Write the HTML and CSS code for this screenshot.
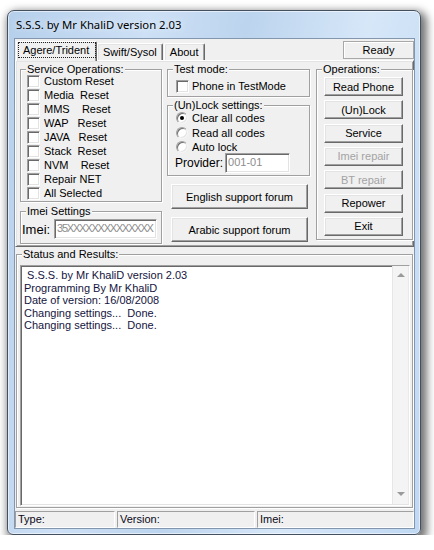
FILE: index.html
```html
<!DOCTYPE html>
<html>
<head>
<meta charset="utf-8">
<title>S.S.S. by Mr KhaliD version 2.03</title>
<link rel="stylesheet" href="styles.css">
</head>
<body>
<div class="window">
  <div class="titlebar">S.S.S. by Mr KhaliD version 2.03</div>
  <div class="client">
    <div class="tabrow">
      <div class="tab active"><span class="focus">Agere/Trident</span></div>
      <div class="tab">Swift/Sysol</div>
      <div class="tab about">About</div>
      <div class="ready">Ready</div>
    </div>
    <div class="sheet">
      <div class="col col1">
        <div class="group service">
          <div class="gtitle">Service Operations:</div>
          <ul class="checks">
            <li><span class="cb"></span><span class="lbl">Custom Reset</span></li>
            <li><span class="cb"></span><span class="lbl">Media  Reset</span></li>
            <li><span class="cb"></span><span class="lbl">MMS    Reset</span></li>
            <li><span class="cb"></span><span class="lbl">WAP   Reset</span></li>
            <li><span class="cb"></span><span class="lbl">JAVA   Reset</span></li>
            <li><span class="cb"></span><span class="lbl">Stack  Reset</span></li>
            <li><span class="cb"></span><span class="lbl">NVM    Reset</span></li>
            <li><span class="cb"></span><span class="lbl">Repair NET</span></li>
            <li><span class="cb"></span><span class="lbl">All Selected</span></li>
          </ul>
        </div>
        <div class="group imei">
          <div class="gtitle">Imei Settings</div>
          <div class="imeirow">
            <span class="biglabel">Imei:</span>
            <span class="edit imeiedit">35XXXXXXXXXXXXXX</span>
          </div>
        </div>
      </div>
      <div class="col col2">
        <div class="group test">
          <div class="gtitle">Test mode:</div>
          <div class="testrow"><span class="cb"></span><span>Phone  in TestMode</span></div>
        </div>
        <div class="group lock">
          <div class="gtitle">(Un)Lock settings:</div>
          <div class="radios">
            <div class="rrow"><span class="rb on"></span><span>Clear all codes</span></div>
            <div class="rrow"><span class="rb"></span><span>Read all codes</span></div>
            <div class="rrow"><span class="rb"></span><span>Auto lock</span></div>
          </div>
          <div class="provrow">
            <span class="provlabel">Provider:</span>
            <span class="edit provedit">001-01</span>
          </div>
        </div>
        <div class="btn big">English support forum</div>
        <div class="btn big">Arabic support forum</div>
      </div>
      <div class="col col3">
        <div class="group ops">
          <div class="gtitle">Operations:</div>
          <div class="opbtns">
            <div class="btn op">Read Phone</div>
            <div class="btn op">(Un)Lock</div>
            <div class="btn op">Service</div>
            <div class="btn op disabled">Imei repair</div>
            <div class="btn op disabled">BT repair</div>
            <div class="btn op">Repower</div>
            <div class="btn op">Exit</div>
          </div>
        </div>
      </div>
    </div>
    <div class="group status">
      <div class="gtitle">Status and Results:</div>
      <div class="memo">
        <div class="memotext"> S.S.S. by Mr KhaliD version 2.03
Programming By Mr KhaliD
Date of version: 16/08/2008
Changing settings...  Done.
Changing settings...  Done.</div>
        <div class="vscroll"><span class="arr up"></span><span class="arr down"></span></div>
      </div>
    </div>
    <div class="statusbar">
      <div class="panel p-type">Type:</div>
      <div class="panel p-version">Version:</div>
      <div class="panel p-imei">Imei:</div>
    </div>
  </div>
</div>
</body>
</html>
```
FILE: styles.css
```css
* { box-sizing: border-box; }
html, body { margin: 0; padding: 0; background: #ffffff; }
body {
  font-family: "Liberation Sans", Arial, sans-serif;
  font-size: 11px;
  color: #000;
}

/* Window frame */
.window {
  width: 414px;
  height: 525px;
  margin: 10px 0 0 7px;
  border: 1px solid #44505f;
  border-radius: 7px 7px 6px 6px;
  padding: 0 5px 5px 6px;
  display: flex;
  flex-direction: column;
  background: linear-gradient(100deg, #b5cfeb 0%, #cde0f5 28%, #bcd4ee 48%, #d6e7f8 72%, #c0d8f3 100%);
  box-shadow: inset 0 0 0 1px rgba(255,255,255,0.55), 3px 4px 9px 3px rgba(0,0,0,0.55);
}
.titlebar {
  height: 27px;
  line-height: 27px;
  padding-left: 2px;
  font-family: "Noto Sans", "Liberation Sans", sans-serif;
  font-size: 11.3px;
  color: #000;
  text-shadow: 0 0 6px rgba(255,255,255,0.9);
  white-space: nowrap;
}
.client {
  height: 491px;
  border: 1px solid #8296ad;
  background: #f0f0f0;
  display: flex;
  flex-direction: column;
}

/* Tabs */
.tabrow {
  height: 21px;
  display: flex;
  align-items: flex-end;
  padding-left: 1px;
}
.tab {
  height: 17px;
  padding: 0 5px;
  line-height: 16px;
  border: 1px solid;
  border-color: #ffffff #696969 transparent #ffffff;
  border-bottom: none;
  border-radius: 2px 2px 0 0;
  box-shadow: inset -1px 0 #a0a0a0, inset 1px 1px #e3e3e3;
  white-space: nowrap;
}
.tab.about { margin-left: 1px; }
.tab.active {
  height: 20px;
  width: 81px;
  padding: 0 0 0 1px;
  margin-bottom: -1px;
  position: relative;
  z-index: 1;
  background: #f0f0f0;
}
.focus {
  display: block;
  height: 16px;
  line-height: 14px;
  padding: 0 4px;
  border: 1px dotted #222;
  width: 78px;
}
.ready {
  margin-left: auto;
  align-self: flex-start;
  margin-top: 2px;
  width: 71px;
  height: 18px;
  line-height: 16px;
  text-align: center;
  border: 1px solid #a8a8a8;
  box-shadow: inset 1px 1px #ffffff;
}

/* Tab sheet */
.sheet {
  height: 187px;
  border: 1px solid;
  border-color: #ffffff #696969 #696969 #ffffff;
  box-shadow: inset 1px 1px #e3e3e3, inset -1px -1px #a0a0a0;
  display: flex;
  align-items: flex-start;
  padding: 8px 0 0 4px;
}
.col { display: flex; flex-direction: column; }
.col1 { width: 142px; }
.col2 { width: 143px; margin-left: 5px; }
.col3 { width: 97px; margin-left: 6px; }

/* Group boxes (etched) */
.group {
  border: 1px solid #a0a0a0;
  box-shadow: inset 1px 1px #ffffff, 1px 1px #ffffff;
  display: flex;
  flex-direction: column;
}
.gtitle {
  align-self: flex-start;
  margin: -7px 0 0 5px;
  padding: 0 1px;
  line-height: 13px;
  background: #f0f0f0;
  white-space: nowrap;
}

/* Checkbox / radio */
.cb {
  width: 13px;
  height: 13px;
  flex: none;
  background: #ffffff;
  border: 1px solid;
  border-color: #a0a0a0 #ffffff #ffffff #a0a0a0;
  box-shadow: inset 1px 1px #696969, inset -1px -1px #e3e3e3;
}
.rb {
  width: 12px;
  height: 12px;
  flex: none;
  border-radius: 50%;
  background: #ffffff;
  border: 1px solid;
  border-color: #a0a0a0 #f4f4f4 #f4f4f4 #a0a0a0;
  box-shadow: inset 1px 1px #707070, inset -1px -1px #e3e3e3;
  display: flex;
  align-items: center;
  justify-content: center;
}
.rb.on::after {
  content: "";
  width: 4px;
  height: 4px;
  border-radius: 50%;
  background: #000;
}

/* Service group */
.service { height: 133px; }
.checks {
  list-style: none;
  margin: -2px 0 0;
  padding: 0 0 0 6px;
}
.checks li {
  height: 14px;
  display: flex;
  align-items: center;
}
.checks .cb { margin-right: 4px; }
.checks .lbl { white-space: pre; }

/* Imei group */
.imei { height: 33px; margin-top: 9px; }
.imeirow {
  display: flex;
  align-items: center;
  margin-top: 1px;
  padding-left: 1px;
}
.biglabel { font-size: 13px; width: 32px; }
.edit {
  height: 20px;
  line-height: 16px;
  padding: 0 2px;
  background: #ffffff;
  color: #8c8c8c;
  border: 1px solid;
  border-color: #a0a0a0 #ffffff #ffffff #a0a0a0;
  box-shadow: inset 1px 1px #696969, inset -1px -1px #e3e3e3;
  overflow: hidden;
  white-space: nowrap;
}
.imeiedit { width: 103px; letter-spacing: -1.2px; padding-left: 2px; }
.provedit { width: 65px; margin-left: 2px; }

/* Test group */
.test { height: 28px; }
.testrow {
  display: flex;
  align-items: center;
  height: 14px;
  margin-top: 3px;
  padding-left: 8px;
}
.testrow .cb { margin-right: 3px; }

/* Lock group */
.lock { height: 71px; margin-top: 8px; }
.radios { margin-top: -1px; padding-left: 8px; }
.rrow {
  height: 14.5px;
  display: flex;
  align-items: center;
}
.rrow .rb { margin-right: 4px; }
.provrow {
  display: flex;
  align-items: center;
  margin-top: -1.5px;
  padding-left: 7px;
}
.provlabel { font-size: 12px; }

/* Buttons */
.btn {
  display: flex;
  align-items: center;
  justify-content: center;
  background: #f0f0f0;
  border: 1px solid;
  border-color: #ffffff #696969 #696969 #ffffff;
  box-shadow: inset -1px -1px #a0a0a0, inset 1px 1px #e3e3e3;
  white-space: nowrap;
}
.btn.big {
  width: 137px;
  height: 25px;
  margin: 8px 0 0 4px;
}
.ops { height: 171px; }
.opbtns {
  display: flex;
  flex-direction: column;
  gap: 4.33px;
  margin-top: 1px;
  padding-left: 7px;
}
.btn.op { width: 79px; height: 19px; }
.btn.disabled { color: #a3a3a3; }

/* Status group */
.status {
  height: 254px;
  margin: 7px 1px 0 1px;
}
.memo {
  height: 241px;
  margin: 4px 2px 0 3px;
  background: #ffffff;
  border: 1px solid;
  border-color: #a0a0a0 #ffffff #ffffff #a0a0a0;
  box-shadow: inset 1px 1px #696969, inset -1px -1px #e3e3e3;
  display: flex;
}
.memotext {
  flex: 1;
  padding: 3px 0 0 3px;
  line-height: 12.5px;
  white-space: pre;
  color: #14143e;
}
.vscroll {
  width: 17px;
  flex: none;
  margin: 0 0 1px 0;
  background: linear-gradient(to right, #e6e6e6 0, #e6e6e6 1px, #f4f4f4 1px, #f4f4f4 16px, #e9e9e9 16px);
  display: flex;
  flex-direction: column;
  justify-content: space-between;
  align-items: center;
  padding: 7px 0 8px;
}
.arr {
  width: 0;
  height: 0;
  border-left: 4px solid transparent;
  border-right: 4px solid transparent;
}
.arr.up { border-bottom: 4px solid #9a9a9a; }
.arr.down { border-top: 4px solid #9a9a9a; }

/* Status bar */
.statusbar {
  height: 17px;
  margin-top: 3px;
  display: flex;
  gap: 2px;
}
.panel {
  height: 17px;
  line-height: 15px;
  padding-left: 2px;
  border: 1px solid;
  border-color: #a0a0a0 #ffffff #ffffff #a0a0a0;
  color: #0a0a20;
}
.p-type { width: 100px; }
.p-version { width: 138px; }
.p-imei { flex: 1; }
```
